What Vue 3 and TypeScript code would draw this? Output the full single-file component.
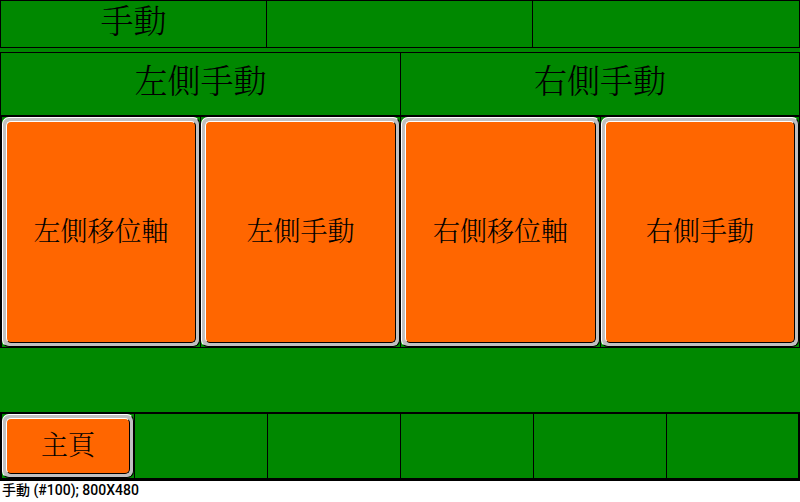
<script setup lang="ts">
const statusCells: string[] = ['手動', '', '']
const sides: string[] = ['左側手動', '右側手動']
const actions: string[] = ['左側移位軸', '左側手動', '右側移位軸', '右側手動']
const navigation: string[] = ['主頁', '', '', '', '', '']
</script>

<template>
  <main class="screen">
    <header class="status">
      <div v-for="(label, i) in statusCells" :key="i" class="cell">{{ label }}</div>
    </header>
    <section class="manual">
      <div class="sides">
        <h2 v-for="side in sides" :key="side" class="cell">{{ side }}</h2>
      </div>
      <div class="actions">
        <div v-for="action in actions" :key="action" class="slot">
          <button type="button" class="key"><span class="face">{{ action }}</span></button>
        </div>
      </div>
    </section>
    <nav class="navigation">
      <div v-for="(label, i) in navigation" :key="i" class="slot">
        <button v-if="label" type="button" class="key"><span class="face">{{ label }}</span></button>
      </div>
    </nav>
  </main>
  <footer class="caption">手動 (#100); 800X480</footer>
</template>

<style>
body {
  margin: 0;
  background: #fff;
}
</style>

<style scoped>
.screen {
  display: flex;
  flex-direction: column;
  background: #008800;
  color: #000;
  font-family: "Liberation Serif", "Noto Serif CJK TC", "Noto Sans CJK TC", serif;
  font-weight: 300;
}

.status,
.sides,
.actions,
.navigation {
  display: grid;
  box-sizing: border-box;
}

.status {
  grid-template-columns: repeat(3, 1fr);
  height: 48px;
  margin-bottom: 4px;
  border: 1px solid #000;
}

.sides {
  grid-template-columns: repeat(2, 1fr);
  height: 63px;
  border: 1px solid #000;
  border-bottom: 0;
}

.cell {
  display: flex;
  align-items: center;
  justify-content: center;
  box-sizing: border-box;
  margin: 0;
  padding-bottom: 4px;
  font-size: 33px;
  font-weight: 300;
  line-height: 40px;
}

.status .cell:not(:last-child) {
  border-right: 1px solid #000;
}

.sides .cell + .cell {
  border-left: 1px solid #000;
}

.actions {
  grid-template-columns: repeat(4, 1fr);
  height: 233px;
  border-top: 2px solid #000;
  border-bottom: 1px solid #000;
}

.navigation {
  grid-template-columns: repeat(6, 1fr);
  height: 69px;
  margin-top: 64px;
  border: solid #000;
  border-width: 2px 1px 3px 1px;
}

.slot {
  display: flex;
  box-sizing: border-box;
  border-left: 1px solid #000;
}

.actions .slot:first-child {
  border-left-width: 2px;
}

.slot:last-child {
  border-right: 1px solid #000;
}

.key {
  display: flex;
  flex: 1;
  box-sizing: border-box;
  margin: 0;
  padding: 3px;
  border: 1px solid;
  border-color: #fff #000 #000 #fff;
  border-radius: 7px;
  background: #c0c0c0;
  color: inherit;
  font: inherit;
  cursor: pointer;
}

.face {
  display: flex;
  flex: 1;
  align-items: center;
  justify-content: center;
  box-sizing: border-box;
  height: 100%;
  border: 1px solid;
  border-color: #fff #000 #000 #fff;
  border-radius: 5px;
  background: #ff6600;
  font-size: 27px;
  line-height: 32px;
  white-space: nowrap;
}

.caption {
  padding-left: 2px;
  color: #000;
  font-family: Roboto, "Noto Sans CJK TC", sans-serif;
  font-size: 14px;
  font-weight: 500;
  line-height: 18px;
}
</style>
